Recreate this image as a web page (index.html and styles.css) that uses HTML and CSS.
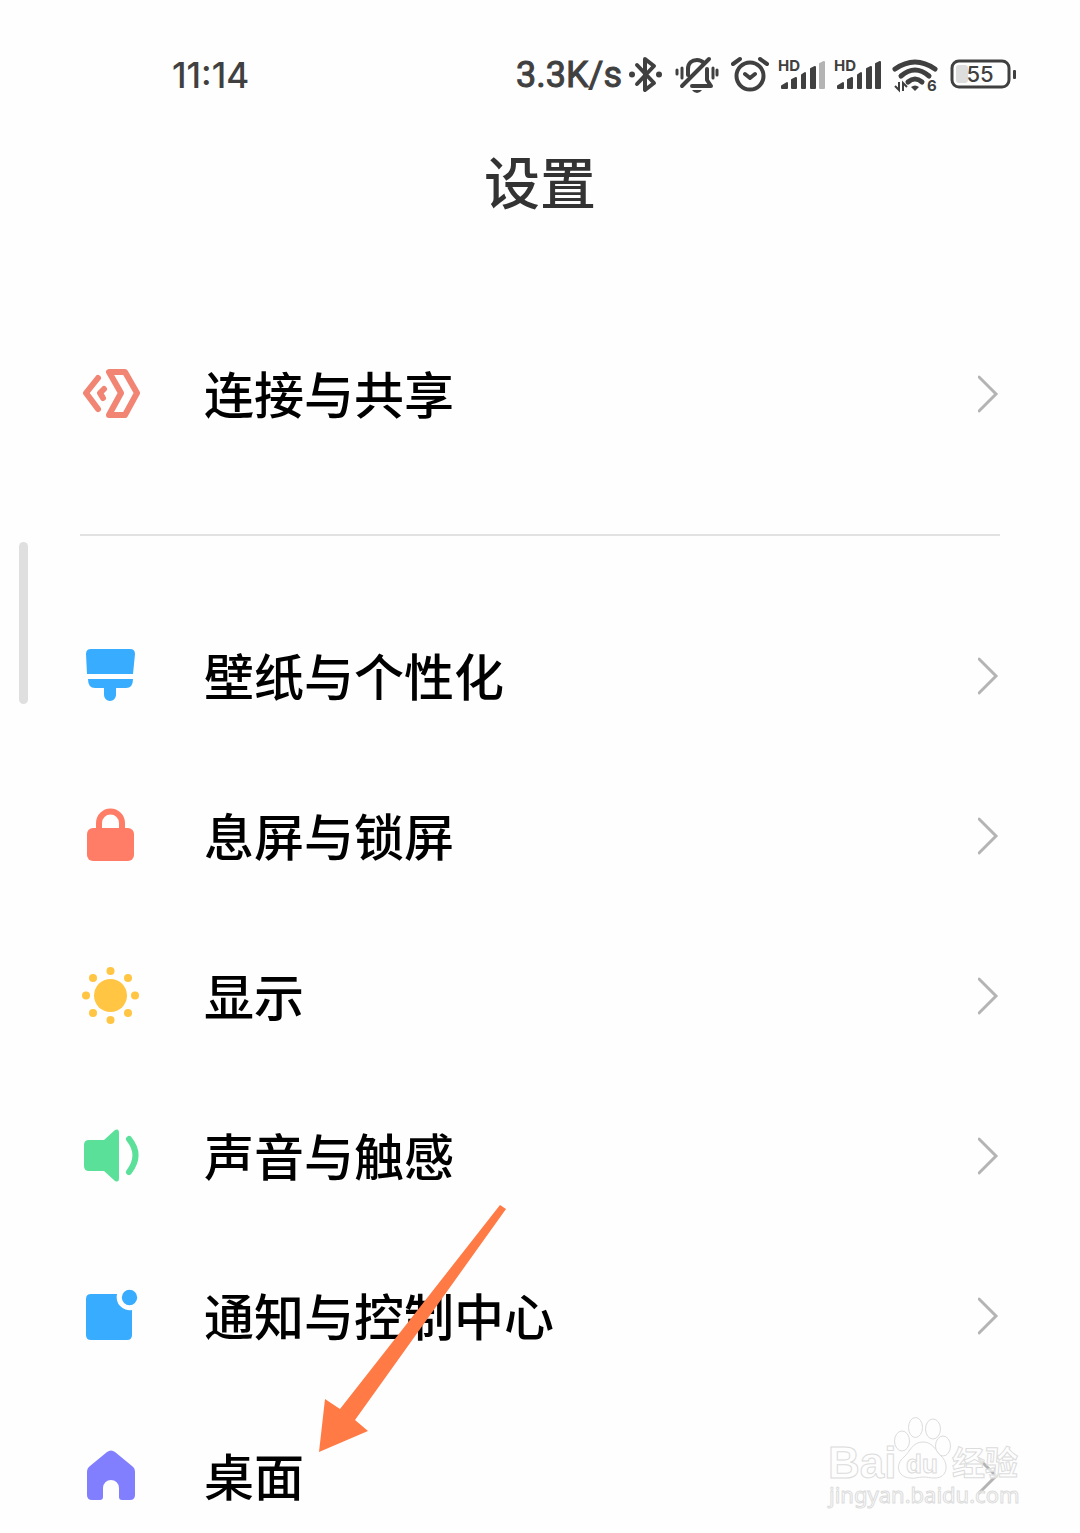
FILE: index.html
```html
<!DOCTYPE html>
<html lang="zh-CN">
<head>
  <meta charset="UTF-8">
  <meta name="viewport" content="width=device-width, initial-scale=1">
  <title>设置</title>
  <link rel="stylesheet" href="styles.css">
</head>
<body>

<div class="screen">
  <header class="status-bar">
    <time class="clock">11:14</time>
    <div class="status-icons">
      <span class="speed">3.3K/s</span>
      <!-- bluetooth -->
      <svg width="39" height="60" viewBox="0 0 39 60">
        <path class="line" d="M11 20L28 38L19 45V14L28 21L11 39"/>
        <circle cx="6" cy="29.500" r="3"/><circle cx="33" cy="29.500" r="3"/>
      </svg>
      <!-- muted, vibrate -->
      <svg width="48" height="60" viewBox="0 0 48 60">
        <path class="line" d="M15 30V24C15 18 19 15 24 15C27 15 29 16 31 18M9 41L36 14M19 41H38L34 35V24"/>
        <path d="M19 45H29Q27 48 24 48Q21 48 19 45Z"/>
        <path class="line thin" d="M4 25V29M9 23V33M40 23V33M44 25V30"/>
      </svg>
      <!-- alarm -->
      <svg width="41" height="60" viewBox="0 0 41 60">
        <circle class="line" cx="21" cy="31" r="13.500"/>
        <path class="line" d="M4 19L11 14M31 14L38 19M16 29L21 33L26 29"/>
      </svg>
      <!-- sim 1 -->
      <svg width="48" height="60" viewBox="0 0 48 60">
        <text class="hd" x="0" y="26">HD</text>
        <path class="bars" d="M4 41L9 38V43H4ZM14 35L18 33V43H14ZM24 30L27 28V43H24ZM33 24L37 22V43H33Z"/>
        <path class="bars weak" d="M42 19L46 17V43H42Z"/>
      </svg>
      <!-- sim 2 -->
      <svg width="48" height="60" viewBox="0 0 48 60">
        <text class="hd" x="0" y="26">HD</text>
        <path class="bars" d="M4 41L9 38V43H4ZM14 35L18 33V43H14ZM24 30L27 28V43H24ZM33 24L37 22V43H33ZM42 19L46 17V43H42Z"/>
      </svg>
      <!-- wifi 6 -->
      <svg width="50" height="60" viewBox="0 0 50 60">
        <path class="line wave" d="M5 24Q25 10 45 24M11 31Q25 19 39 31M18 37Q25 31 32 37"/>
        <path d="M21 42Q25 39 29 42L25 46Z"/>
        <path class="arrows" d="M9 37V45L5 41M13 46V38L17 42"/>
        <text class="hd" x="37" y="46">6</text>
      </svg>
      <!-- battery -->
      <svg width="68" height="60" viewBox="0 0 68 60">
        <rect class="charge" x="8" y="20" width="12" height="18" rx="3"/>
        <rect class="line case" x="4" y="16" width="57" height="26" rx="7"/>
        <rect x="65" y="25" width="3" height="9" rx="1"/>
        <text class="percent" x="32" y="37">55</text>
      </svg>
    </div>
  </header>

  <h1>设置</h1>

  <nav class="settings">
    <a class="row" href="#connection">
      <svg class="icon coral" viewBox="0 0 60 60">
        <path class="stroke" d="M18 14L6 29L18 45M24 25L20 29L23 34M29 8H45L57 29L45 51H29L41 29Z"/>
      </svg>
      <span class="label">连接与共享</span>
      <svg class="chevron" viewBox="0 0 22 40"><path d="M1 3L18 20L1 37"/></svg>
    </a>
    <hr>
    <a class="row" href="#wallpaper">
      <svg class="icon blue" viewBox="0 0 60 60">
        <path d="M11 3H50Q55 3 55 8L53 28H7L6 8Q6 3 11 3ZM8 33H53Q53 42 46 42H36V49A6 6 0 0 1 24 49V42H15Q8 42 8 33Z"/>
      </svg>
      <span class="label">壁纸与个性化</span>
      <svg class="chevron" viewBox="0 0 22 40"><path d="M1 3L18 20L1 37"/></svg>
    </a>
    <a class="row" href="#lockscreen">
      <svg class="icon red" viewBox="0 0 60 60">
        <rect x="7" y="22" width="47" height="33" rx="6"/>
        <path class="stroke" d="M19 24V17A11.500 11.500 0 0 1 42 17V24"/>
      </svg>
      <span class="label">息屏与锁屏</span>
      <svg class="chevron" viewBox="0 0 22 40"><path d="M1 3L18 20L1 37"/></svg>
    </a>
    <a class="row" href="#display">
      <svg class="icon yellow" viewBox="0 0 60 60">
        <circle cx="30.500" cy="29.500" r="16.500"/>
        <circle cx="30.500" cy="5" r="4"/><circle cx="30.500" cy="54" r="4"/>
        <circle cx="6" cy="29.500" r="4"/><circle cx="55" cy="29.500" r="4"/>
        <circle cx="13" cy="12" r="4"/><circle cx="48" cy="12" r="4"/>
        <circle cx="13" cy="47" r="4"/><circle cx="48" cy="47" r="4"/>
      </svg>
      <span class="label">显示</span>
      <svg class="chevron" viewBox="0 0 22 40"><path d="M1 3L18 20L1 37"/></svg>
    </a>
    <a class="row" href="#sound">
      <svg class="icon green" viewBox="0 0 60 60">
        <path d="M9 14H24L35 4Q39 2 39 7V52Q39 57 35 55L24 45H9Q4 45 4 40V19Q4 14 9 14Z"/>
        <path class="stroke" d="M49 13Q62 29 49 46"/>
      </svg>
      <span class="label">声音与触感</span>
      <svg class="chevron" viewBox="0 0 22 40"><path d="M1 3L18 20L1 37"/></svg>
    </a>
    <a class="row" href="#notification">
      <svg class="icon blue" viewBox="0 0 60 60">
        <path d="M11 8H37A13 13 0 0 0 52 24V49Q52 54 47 54H11Q6 54 6 49V13Q6 8 11 8Z"/>
        <circle cx="49.500" cy="11.500" r="7.700"/>
      </svg>
      <span class="label">通知与控制中心</span>
      <svg class="chevron" viewBox="0 0 22 40"><path d="M1 3L18 20L1 37"/></svg>
    </a>
    <a class="row" href="#home">
      <svg class="icon purple" viewBox="0 0 60 60">
        <path d="M27 6Q31 3 35 6L52 20Q55 22 55 26V49Q55 54 50 54H42Q39 54 39 51V42A8 8 0 0 0 23 42V51Q23 54 20 54H12Q7 54 7 49V26Q7 22 10 20Z"/>
      </svg>
      <span class="label">桌面</span>
      <svg class="chevron" viewBox="0 0 22 40"><path d="M1 3L18 20L1 37"/></svg>
    </a>
  </nav>

  <div class="scroll-thumb"></div>

  <svg class="pointer" viewBox="0 0 190 250">
    <path d="M0 248L6 195L21 205L181 1L187 5L36 216L49 227Z"/>
  </svg>

  <svg class="watermark" viewBox="0 0 210 105">
    <text class="wm-bai" x="8" y="68">Bai</text>
    <ellipse cx="82" cy="31" rx="7.500" ry="10"/>
    <ellipse cx="95.500" cy="17.500" rx="7" ry="10"/>
    <ellipse cx="113" cy="19" rx="7.500" ry="10"/>
    <ellipse cx="123" cy="36" rx="7.500" ry="10"/>
    <path d="M103 32C113 32 116 41 121 46C129 53 128 68 115 68C110 68 107 67 103 67C98 67 95 69 90 68C77 67 75 54 84 47C90 42 92 32 103 32Z"/>
    <text class="wm-du" x="86" y="63">du</text>
    <text class="wm-cn" x="132" y="65">经验</text>
    <text class="wm-url" x="9" y="93">jingyan.baidu.com</text>
  </svg>
</div>

</body>
</html>
```
FILE: styles.css
```css
* { box-sizing: border-box; }
body {
  margin: 0;
  background: #fefefe;
  color: #000;
  font-family: "Noto Sans CJK SC", sans-serif;
}
.screen {
  position: relative;
  height: 100vh;
  overflow: hidden;
}

/* status bar */
.status-bar {
  display: flex;
  justify-content: space-between;
  align-items: center;
  margin-top: 45px;
  padding: 0 64px 0 172px;
  height: 60px;
  color: #404040;
  font-family: Roboto, sans-serif;
  font-size: 36px;
}
.clock { font: 500 35px Inter, sans-serif; }
.status-icons {
  display: flex;
  align-items: center;
  gap: 8px;
  fill: #404040;
}
.speed {
  margin-right: -4px;
  -webkit-text-stroke: 1px #404040;
}
.line {
  fill: none;
  stroke: #404040;
  stroke-width: 4;
  stroke-linecap: round;
  stroke-linejoin: round;
}
.thin, .case { stroke-width: 3; }
.wave { stroke-width: 5; }
.arrows {
  fill: none;
  stroke: #404040;
  stroke-width: 2;
}
.bars {
  stroke: #404040;
  stroke-width: 2;
  stroke-linejoin: round;
}
.weak {
  fill: #b4b4b4;
  stroke: #b4b4b4;
}
.charge { fill: #ddd; }
.hd { font: bold 15px Inter, sans-serif; }
.percent { font: 500 22px Inter, sans-serif; text-anchor: middle; }

h1 {
  margin: 43px 0 0;
  color: #333;
  font-size: 56px;
  font-weight: 500;
  line-height: 64px;
  text-align: center;
}

/* list */
.settings {
  margin-top: 102px;
  padding: 0 80px;
}
.row {
  display: flex;
  align-items: center;
  height: 160px;
  color: inherit;
  text-decoration: none;
}
.label {
  flex: 1;
  margin-left: 64px;
  padding-bottom: 4px;
  font-size: 50px;
  font-weight: 500;
  line-height: 60px;
}
hr {
  height: 2px;
  margin: 60px 0;
  border: none;
  background: #e2e2e2;
}
.icon {
  width: 60px;
  height: 60px;
  fill: currentColor;
}
.stroke {
  fill: none;
  stroke: currentColor;
  stroke-width: 6;
  stroke-linecap: round;
  stroke-linejoin: round;
}
.coral { color: #f18472; }
.blue { color: #38adff; }
.red { color: #ff7c66; }
.yellow { color: #ffc543; }
.green { color: #5be09a; }
.purple { color: #827fff; }
.chevron {
  width: 22px;
  height: 40px;
  fill: none;
  stroke: #b4b4b4;
  stroke-width: 3;
  stroke-linecap: round;
}

/* overlays */
.scroll-thumb {
  position: absolute;
  left: 19px;
  top: 542px;
  width: 9px;
  height: 162px;
  border-radius: 5px;
  background: #dfdfdf;
}
.pointer {
  position: absolute;
  left: 319px;
  top: 1204px;
  width: 190px;
  height: 250px;
  fill: #ff7a45;
}
.watermark {
  position: absolute;
  right: 50px;
  bottom: 18px;
  width: 210px;
  height: 105px;
  fill: #fefefe;
  fill-opacity: 0.7;
  stroke: #dcdcdc;
  stroke-width: 1;
}
.wm-bai { font: bold 44px "Liberation Sans", sans-serif; }
.wm-du { font: bold 26px "Liberation Sans", sans-serif; }
.wm-cn { font: bold 33px "Noto Sans CJK SC", sans-serif; }
.wm-url { font: 22px "Noto Sans", sans-serif; }
```
